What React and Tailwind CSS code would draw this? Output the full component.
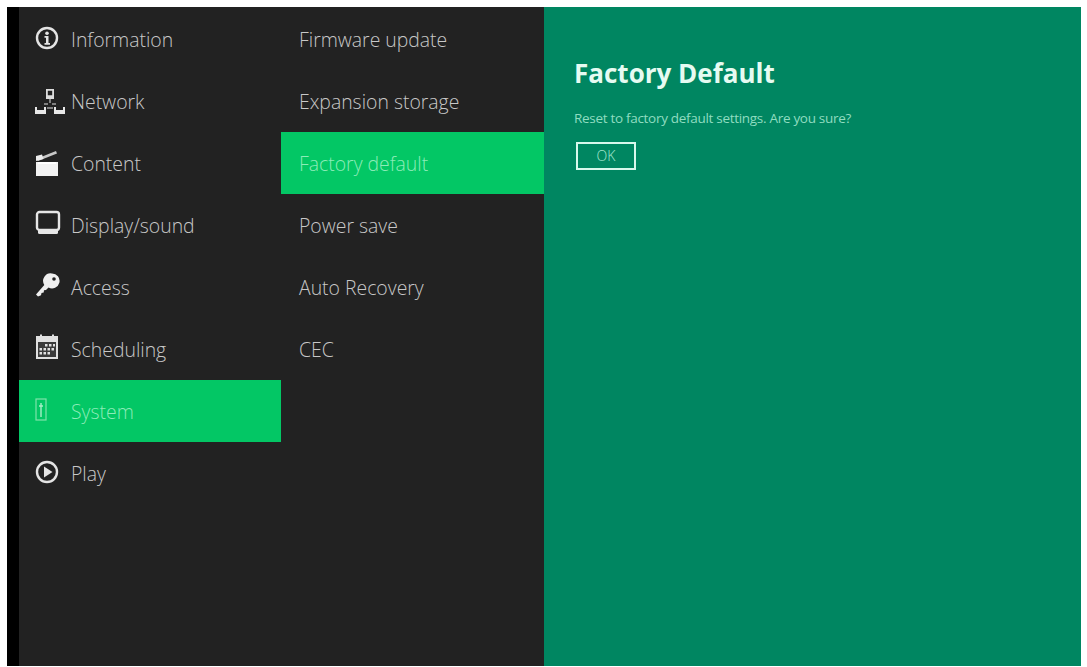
const InfoIcon = () => (
  <svg width="24" height="24" viewBox="0 0 24 24" className="-mt-1">
    <circle cx="12" cy="12" r="10" fill="none" stroke="#e4e4e4" strokeWidth="2.400" />
    <circle cx="12" cy="7.200" r="1.800" fill="#e4e4e4" />
    <path d="M9.500 10h4v7h1.500v1.800H9.500V17H11v-5.200H9.500z" fill="#e4e4e4" />
  </svg>
);

const NetworkIcon = () => (
  <svg width="30" height="26" viewBox="0 0 30 26" className="-mt-0.5">
    <path d="M11 1h8v10h-8z M12.800 2.800v4.500h4.400V2.800z" fill="#dcdcdc" fillRule="evenodd" />
    <path d="M0 19h2v3h7v-3h2v7H0z M19 19h2v3h7v-3h2v7H19z" fill="#e8e8e8" />
    <path d="M15 11v4M12 20h6M9 16h4M17 16h4" stroke="#a0a0a0" strokeWidth="1.500" />
  </svg>
);

const ClapperIcon = () => (
  <svg width="24" height="27" viewBox="0 0 24 27" className="-mt-0.5">
    <path d="M1 12h22v14H1z" fill="#f2f2f2" />
    <path d="M1 9L21 1l1 2.500L3 11z" fill="#c8c8c8" />
    <path d="M1 6l6-1.500 1.500 4.500L1 11z" fill="#ececec" />
    <path d="M3 12h18v2H3z" fill="#ffffff" />
  </svg>
);

const DisplayIcon = () => (
  <svg width="26" height="26" viewBox="0 0 26 26" className="-mt-1.5">
    <rect x="2" y="2" width="22" height="18" rx="2.500" fill="none" stroke="#e6e6e6" strokeWidth="2.400" />
    <path d="M3 20h20v2.500a1.500 1.500 0 0 1-1.500 1.500h-17A1.500 1.500 0 0 1 3 22.500z" fill="#e6e6e6" />
  </svg>
);

const KeyIcon = () => (
  <svg width="26" height="26" viewBox="0 0 26 26" className="-mt-1.5">
    <path d="M17 1.500a7.500 7.500 0 1 1-3.500 14.100l-2.500 2.500-2 .2-.3 2.200-2.200.5-.5 2.200-3 1.300-2-2 8.300-9.600A7.500 7.500 0 0 1 17 1.500z" fill="#efefef" />
    <circle cx="19" cy="7" r="1.800" fill="#222222" />
  </svg>
);

const CalendarIcon = () => (
  <svg width="24" height="26" viewBox="0 0 24 26" className="-mt-1.5">
    <path d="M1 2h22v23H1z" fill="#e0e0e0" />
    <path d="M3 8h18v15H3z" fill="#3a3a3a" />
    <path d="M5 0.500h2v3H5zM17 0.500h2v3h-2z" fill="#e0e0e0" />
    <path d="M10 10h2.500v2.500H10zM14 10h2.500v2.500H14zM18 10h2v2.500h-2zM4.500 14h2.500v2.500H4.500zM8.500 14H11v2.500H8.500zM12.500 14H15v2.500h-2.500zM16.500 14H19v2.500h-2.500zM4.500 18H7v2.500H4.500zM8.500 18H11v2.500H8.500zM12.500 18H15v2.500h-2.500z" fill="#e0e0e0" />
  </svg>
);

const SystemIcon = () => (
  <svg width="14" height="26" viewBox="0 0 14 26" className="-mt-1 -ml-px">
    <rect x="2" y="2" width="10" height="21" fill="none" stroke="#7fe3aa" strokeWidth="1.200" />
    <path d="M7 6v14M5 9h4" stroke="#a8eec6" strokeWidth="1.400" />
  </svg>
);

const PlayIcon = () => (
  <svg width="24" height="24" viewBox="0 0 24 24" className="-mt-1">
    <circle cx="12" cy="12" r="10" fill="none" stroke="#e4e4e4" strokeWidth="2.400" />
    <path d="M9 6.500l8.500 5.500L9 17.500z" fill="#e4e4e4" />
  </svg>
);

const mainMenu = [
  { label: "Information", icon: <InfoIcon /> },
  { label: "Network", icon: <NetworkIcon /> },
  { label: "Content", icon: <ClapperIcon /> },
  { label: "Display/sound", icon: <DisplayIcon /> },
  { label: "Access", icon: <KeyIcon /> },
  { label: "Scheduling", icon: <CalendarIcon /> },
  { label: "System", icon: <SystemIcon />, active: true },
  { label: "Play", icon: <PlayIcon /> },
];

const subMenu = [
  { label: "Firmware update" },
  { label: "Expansion storage" },
  { label: "Factory default", active: true },
  { label: "Power save" },
  { label: "Auto Recovery" },
  { label: "CEC" },
];

export default function App() {
  return (
    <div className="w-[1087px] h-[667px] bg-white pt-[7px] pb-px pl-[7px] pr-[6px] overflow-hidden font-['Open_Sans',sans-serif]">
      <div className="flex h-full">
        <div className="w-3 bg-black" />

        {/* Main menu */}
        <div className="w-[262px] bg-[#222222] pt-px">
          {mainMenu.map((item) => (
            <div
              key={item.label}
              className={`flex items-center h-[62px] pt-0.5 text-[19.4px] font-light ${
                item.active ? "bg-[#03c765] text-[#8cecb8]" : "text-[#c8c8c8]"
              }`}
            >
              <div className="w-[52px] pl-4 flex justify-start shrink-0">{item.icon}</div>
              <span>{item.label}</span>
            </div>
          ))}
        </div>

        {/* Sub menu */}
        <div className="w-[263px] bg-[#222222] pt-px">
          {subMenu.map((item) => (
            <div
              key={item.label}
              className={`flex items-center h-[62px] pt-0.5 pl-[18px] text-[19.4px] font-light ${
                item.active ? "bg-[#03c765] text-[#8cecb8]" : "text-[#c8c8c8]"
              }`}
            >
              {item.label}
            </div>
          ))}
        </div>

        {/* Detail */}
        <div className="flex-1 bg-[#008661] pl-[30px] pt-[48px]">
          <h1 className="text-[26px] leading-9 font-bold text-[#e6fbf2]">Factory Default</h1>
          <p className="mt-[17px] text-[13.5px] leading-5 tracking-[-0.3px] text-[#8fdcc0]">
            Reset to factory default settings. Are you sure?
          </p>
          <button className="mt-[14px] ml-[2px] w-[60px] h-[28px] border-2 border-[#d8f8ec] text-sm font-light text-[#a5e6d0] flex items-center justify-center">
            OK
          </button>
        </div>
      </div>
    </div>
  );
}
